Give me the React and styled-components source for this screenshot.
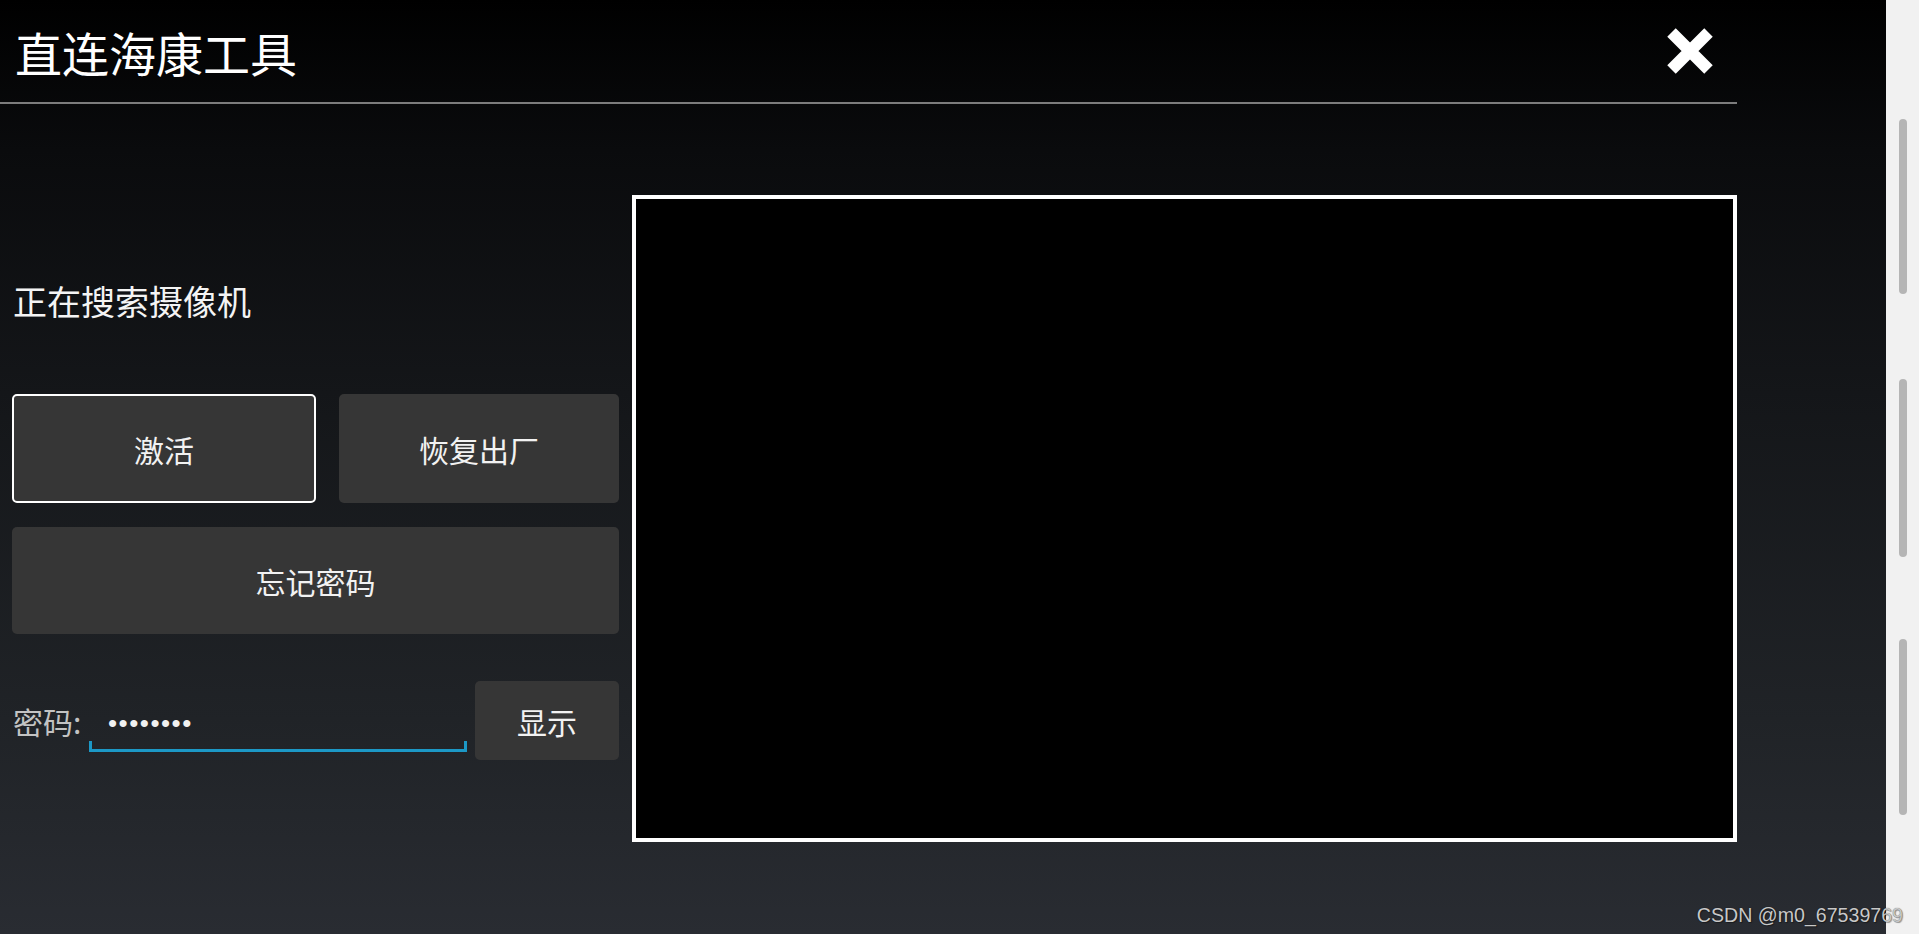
import React from "react";
import styled, { createGlobalStyle } from "styled-components";

const Global = createGlobalStyle`
  html, body { margin: 0; padding: 0; width: 100%; height: 100%; overflow: hidden; }
  body { font-family: "Noto Sans CJK SC", "Noto Sans", sans-serif; background: #000; }
  * { box-sizing: border-box; }
`;

const Screen = styled.div`
  position: relative;
  width: 1919px;
  height: 934px;
  display: flex;
  overflow: hidden;
`;

const Main = styled.div`
  width: 1886px;
  height: 100%;
  background: linear-gradient(to bottom, #000000 0%, #0a0b0d 16%, #141619 42%, #202327 77%, #292c32 100%);
`;

const Column = styled.div`
  width: 1737px;
  display: flex;
  flex-direction: column;
`;

const Header = styled.header`
  height: 104px;
  padding: 0 24px 0 15px;
  border-bottom: 2px solid #7c7c7c;
  display: flex;
  align-items: center;
  justify-content: space-between;
`;

const Title = styled.h1`
  margin: 0;
  font-size: 47px;
  line-height: 1;
  font-weight: 400;
  color: #ffffff;
`;

const CloseButton = styled.button`
  width: 46px;
  height: 46px;
  padding: 0;
  border: none;
  background: transparent;
  display: flex;
  margin-top: 0;
`;

const Body = styled.div`
  display: flex;
  gap: 13px;
  padding: 91px 0 0 12px;
`;

const Controls = styled.div`
  width: 607px;
  display: flex;
  flex-direction: column;
  padding-top: 86px;
`;

const Status = styled.div`
  font-size: 34px;
  line-height: 40px;
  color: #f4f4f4;
  padding-left: 1px;
`;

const ButtonRow = styled.div`
  display: flex;
  gap: 23px;
  margin-top: ${(p) => p.$mt}px;
`;

const ActionButton = styled.button`
  flex: ${(p) => (p.$w ? `0 0 ${p.$w}px` : p.$grow ? "1 1 0" : "none")};
  height: ${(p) => p.$h}px;
  margin-top: ${(p) => p.$mt || 0}px;
  background: #363636;
  border: 2px solid ${(p) => (p.$focused ? "#ffffff" : "transparent")};
  border-radius: 5px;
  color: #f2f2f2;
  font-family: "Noto Sans CJK SC", sans-serif;
  font-size: 30px;
  line-height: 1;
  padding: 0;
  display: flex;
  align-items: center;
  justify-content: center;
`;

const PasswordRow = styled.div`
  display: flex;
  align-items: center;
  height: 79px;
  margin-top: 47px;
`;

const Label = styled.span`
  width: 77px;
  padding-left: 1px;
  font-size: 30px;
  line-height: 1;
  color: #c3c3c3;
`;

const Field = styled.div`
  width: 378px;
  height: 62px;
  margin-right: 8px;
  display: flex;
  flex-direction: column;
  justify-content: flex-end;
`;

const Dots = styled.span`
  padding-left: 19px;
  font-family: "Liberation Sans", Arial, sans-serif;
  font-size: 26px;
  line-height: 26px;
  letter-spacing: 1.5px;
  color: #f0f0f0;
  margin-bottom: 5px;
`;

const Underline = styled.div`
  height: 11px;
  border: 3px solid #1c98c6;
  border-top: none;
`;

const Video = styled.div`
  width: 1105px;
  height: 647px;
  background: #000;
  border: 4px solid #ffffff;
`;

const ScrollStrip = styled.div`
  width: 33px;
  height: 100%;
  background: #f1f1f1;
  display: flex;
  flex-direction: column;
  align-items: flex-start;
  padding: 119px 0 0 13px;
`;

const Thumb = styled.div`
  width: 8px;
  height: ${(p) => p.$h}px;
  margin-top: ${(p) => p.$mt}px;
  border-radius: 4px;
  background: #b5b5b5;
`;

const Watermark = styled.div`
  position: absolute;
  right: 16px;
  bottom: 9px;
  font-family: "Liberation Sans", Arial, sans-serif;
  font-size: 19.6px;
  line-height: 20px;
  color: #c8c8c8;
  text-shadow: 0 0 1px rgba(0, 0, 0, 0.6), 1px 1px 1px rgba(0, 0, 0, 0.35);
  white-space: nowrap;
`;

const CloseIcon = () => (
  <svg width="46" height="46" viewBox="0 0 46 46">
    <path d="M4.5 4.5 L41.5 41.5 M41.5 4.5 L4.5 41.5" stroke="#ffffff" strokeWidth="12" strokeLinecap="butt" fill="none" />
  </svg>
);

export default function App() {
  return (
    <>
      <Global />
      <Screen>
        <Main>
          <Column>
            <Header>
              <Title>直连海康工具</Title>
              <CloseButton aria-label="关闭">
                <CloseIcon />
              </CloseButton>
            </Header>
            <Body>
              <Controls>
                <Status>正在搜索摄像机</Status>
                <ButtonRow $mt={73}>
                  <ActionButton $w={304} $h={109} $focused>激活</ActionButton>
                  <ActionButton $grow $h={109}>恢复出厂</ActionButton>
                </ButtonRow>
                <ActionButton $h={107} $mt={24}>忘记密码</ActionButton>
                <PasswordRow>
                  <Label>密码:</Label>
                  <Field>
                    <Dots>••••••••</Dots>
                    <Underline />
                  </Field>
                  <ActionButton $grow $h={79}>显示</ActionButton>
                </PasswordRow>
              </Controls>
              <Video />
            </Body>
          </Column>
        </Main>
        <ScrollStrip>
          <Thumb $h={175} $mt={0} />
          <Thumb $h={178} $mt={85} />
          <Thumb $h={176} $mt={82} />
        </ScrollStrip>
        <Watermark>CSDN @m0_67539769</Watermark>
      </Screen>
    </>
  );
}
